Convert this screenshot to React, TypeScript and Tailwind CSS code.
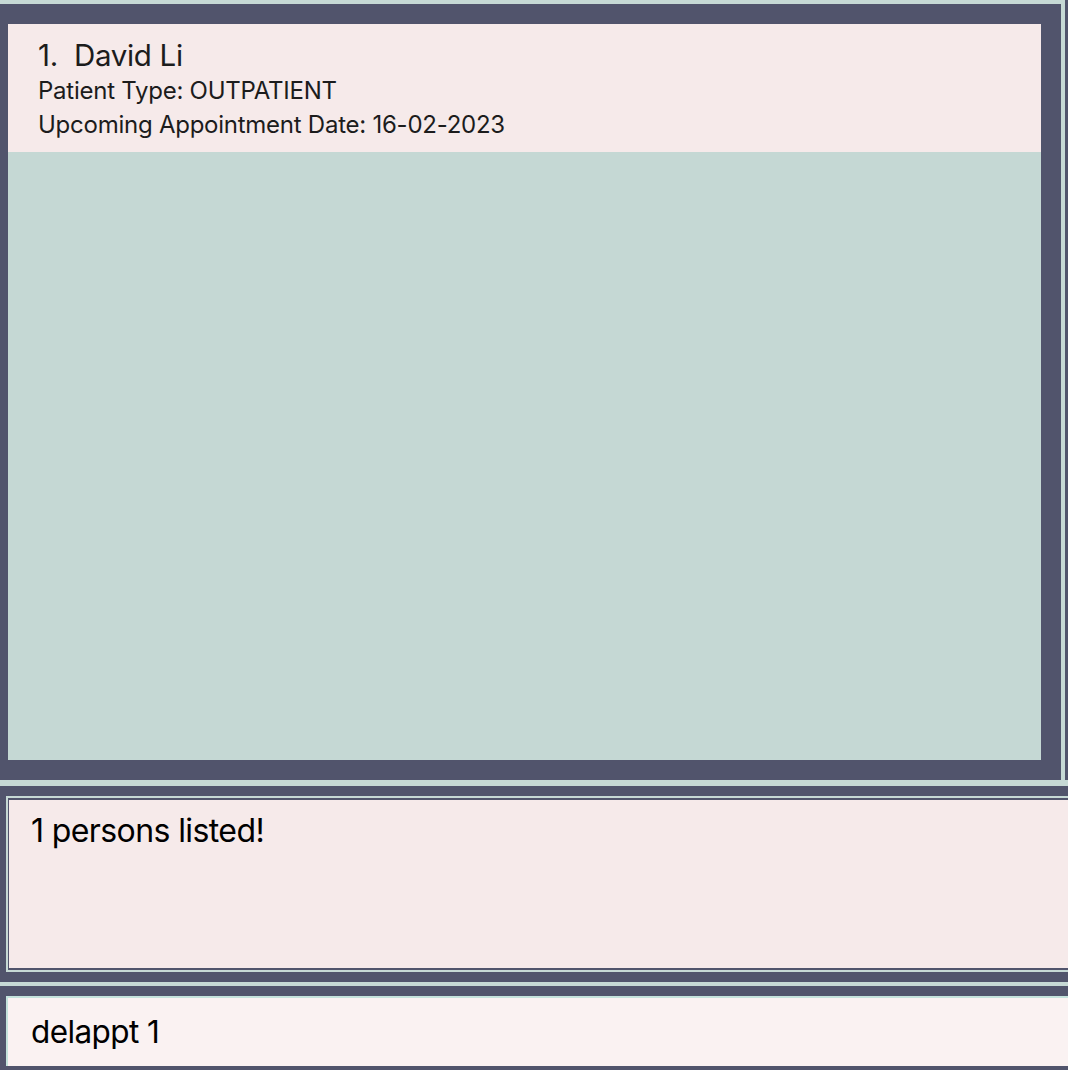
const dark = "bg-[#51546c]";

function PatientCard() {
  return (
    <div className="h-[128px] bg-[#f6eaea] pl-[30px] pt-[14px] text-[#1c1c1c]">
      <div className="whitespace-pre text-[29.5px] leading-[34px] tracking-[-0.3px]">
        1.  David Li
      </div>
      <div className="mt-[2px] text-[24px] leading-[34px] tracking-[-0.25px]">
        Patient Type: OUTPATIENT
      </div>
      <div className="text-[24px] leading-[34px] tracking-[-0.25px]">
        Upcoming Appointment Date: 16-02-2023
      </div>
    </div>
  );
}

export default function App() {
  return (
    <div
      className="flex h-[1070px] w-[1068px] flex-col overflow-hidden bg-[#51546c]"
      style={{ fontFamily: "Inter, 'Noto Sans', sans-serif" }}
    >
      {/* person list */}
      <div className="flex h-[780px]">
        <div className="flex w-[1061px] flex-col">
          <div className="h-[4px] bg-[#c6d9d5]" />
          <div className={`flex-1 ${dark} pb-[20px] pl-[8px] pr-[20px] pt-[20px]`}>
            <div className="flex h-full flex-col bg-[#c5d8d4]">
              <PatientCard />
            </div>
          </div>
        </div>
        <div className="w-[4px] bg-[#c6d9d5]" />
        <div className={`flex-1 ${dark}`} />
      </div>
      <div className="h-[6px] bg-[#c6d9d5]" />

      {/* result display */}
      <div className="h-[196px] pl-[6px] pt-[10px]">
        <div className="h-[176px] border-2 border-r-0 border-[#c6d9d5] bg-[#51546c] py-[2px] pl-[1px]">
          <div className="h-full bg-[#f6eaea] pl-[22px] pt-[9px] text-[32px] leading-[44px] tracking-[-0.6px] text-black">
            1 persons listed!
          </div>
        </div>
      </div>
      <div className="h-[4px] bg-[#c6d9d5]" />

      {/* command box */}
      <div className="h-[84px] pl-[6px] pt-[10px]">
        <div className="h-[70px] border-l-2 border-t-2 border-[#c4e2dc] bg-[#faf2f2] pl-[23px] pt-[12px] text-[31.5px] leading-[44px] tracking-[-0.6px] text-black">
          delappt 1
        </div>
      </div>
    </div>
  );
}
